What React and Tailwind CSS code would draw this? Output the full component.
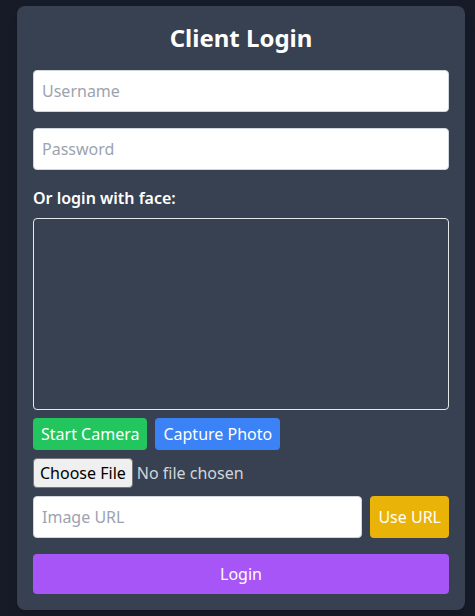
export default function App() {
  return (
    <div
      className="min-h-screen bg-[#161b27] flex items-center justify-center pl-[7px]"
      style={{ fontFamily: '"Noto Sans", "Open Sans", sans-serif' }}
    >
      <div className="w-[448px] bg-[#374151] rounded-lg p-4 text-white shadow-lg">
        <h2 className="text-2xl font-bold text-center mb-4">Client Login</h2>

        <input
          type="text"
          placeholder="Username"
          className="w-full p-2 mb-4 rounded border border-gray-300 bg-white text-black placeholder-[#9ca3af]"
        />
        <input
          type="password"
          placeholder="Password"
          className="w-full p-2 mb-4 rounded border border-gray-300 bg-white text-black placeholder-[#9ca3af]"
        />

        {/* Face login */}
        <p className="font-semibold mb-2">Or login with face:</p>
        <div className="w-full h-48 border border-[#e5e7eb] rounded"></div>

        <div className="mt-2 flex gap-2">
          <button className="bg-[#22c55e] text-white px-2 py-1 rounded">Start Camera</button>
          <button className="bg-[#3b82f6] text-white px-2 py-1 rounded">Capture Photo</button>
        </div>

        <input
          type="file"
          accept="image/*"
          className="mt-2 block text-[#d1d5db] file:text-black file:bg-[#efefef] file:border file:border-[#767676] file:rounded-sm file:px-1.5 file:py-0.5 file:mr-1"
        />

        <div className="mt-2 mb-4 flex gap-2">
          <input
            type="text"
            placeholder="Image URL"
            className="flex-1 p-2 rounded border border-gray-300 bg-white text-black placeholder-[#9ca3af]"
          />
          <button className="bg-[#eab308] text-white px-2 rounded">Use URL</button>
        </div>

        <button className="w-full bg-[#a855f7] text-white py-2 rounded">Login</button>
      </div>
    </div>
  );
}
